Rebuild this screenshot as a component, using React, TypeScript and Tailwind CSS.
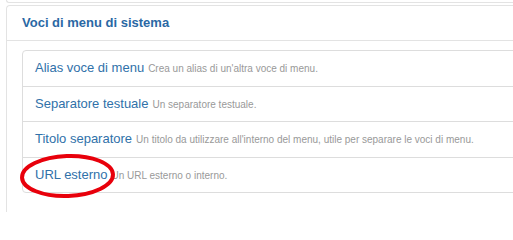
import React from 'react';

type MenuItem = { title: string; desc: string };

const items: MenuItem[] = [
  { title: 'Alias voce di menu', desc: "Crea un alias di un'altra voce di menu." },
  { title: 'Separatore testuale', desc: 'Un separatore testuale.' },
  { title: 'Titolo separatore', desc: "Un titolo da utilizzare all'interno del menu, utile per separare le voci di menu." },
  { title: 'URL esterno', desc: 'Un URL esterno o interno.' },
];

const App: React.FC = () => {
  return (
    <div
      className="relative w-[513px] h-[212px] overflow-hidden bg-white"
      style={{ fontFamily: '"Liberation Sans", Arial, sans-serif' }}
    >
      {/* bottom edge of the previous panel */}
      <div className="ml-[6px] w-[600px] h-[3px] border-l border-b border-[#e3e3e3] rounded-bl-[4px]" />

      <div className="mt-[2px] ml-[6px] w-[600px] h-[260px] border-l border-t border-[#e3e3e3] rounded-tl-[4px]">
        <div className="px-[15px] py-[8px] border-b border-[#e3e3e3]">
          <h2 className="text-[13px] leading-[18px] font-bold text-[#2a68a4]">Voci di menu di sistema</h2>
        </div>
        <div className="pt-[9px] pl-[15px]">
          <ul className="border border-[#dddddd] rounded-[4px]">
            {items.map((item, i) => (
              <li
                key={item.title}
                className={`flex items-baseline gap-[4px] px-[12px] py-[8px] whitespace-nowrap ${i > 0 ? 'border-t border-[#dddddd]' : ''}`}
              >
                <span className="text-[13px] leading-[18.5px] text-[#3071a9]">{item.title}</span>
                <span className="text-[10px] leading-[14px] text-[#999999]">{item.desc}</span>
              </li>
            ))}
          </ul>
        </div>
      </div>

      {/* red annotation ring */}
      <svg className="absolute left-0 top-0 pointer-events-none" width="513" height="212">
        <ellipse
          cx="67.5"
          cy="176"
          rx="45.5"
          ry="20"
          fill="none"
          stroke="#e8000b"
          strokeWidth="4"
          transform="rotate(-2 67.5 176)"
        />
      </svg>
    </div>
  );
};

export default App;
